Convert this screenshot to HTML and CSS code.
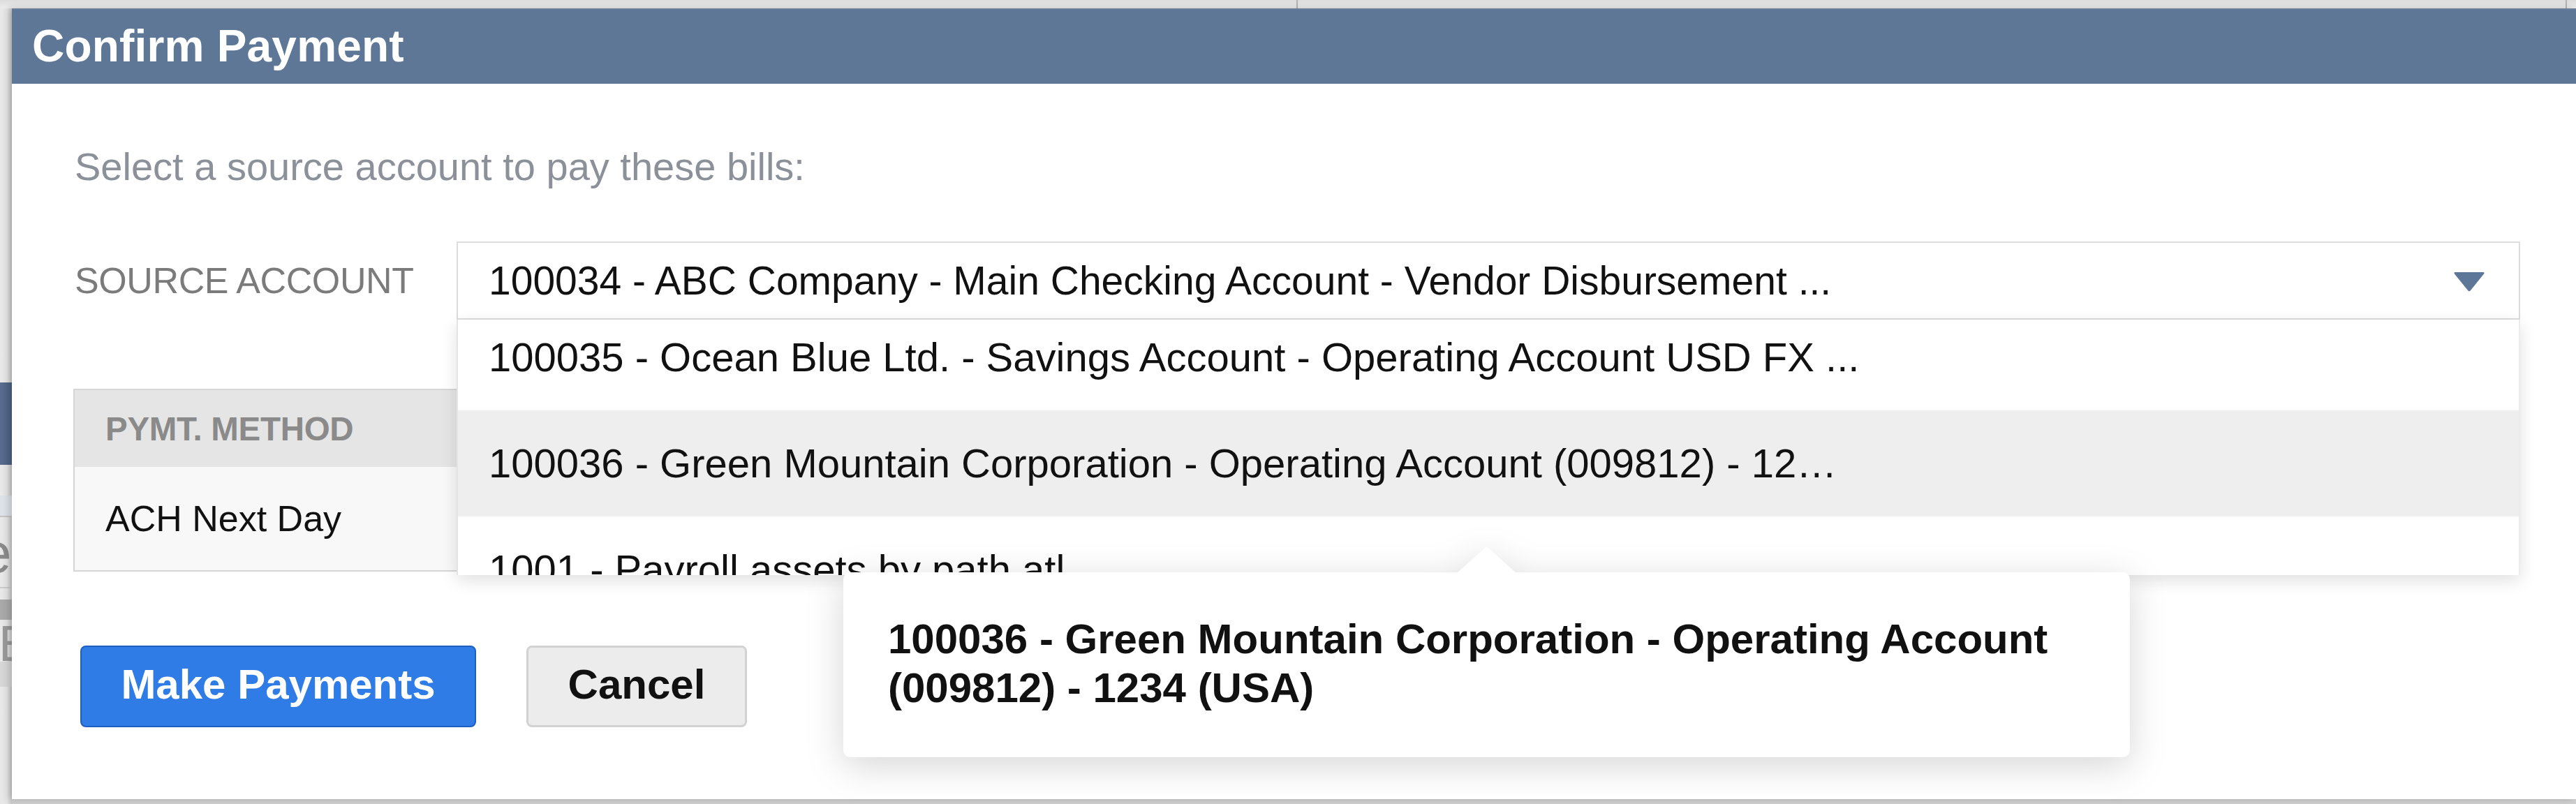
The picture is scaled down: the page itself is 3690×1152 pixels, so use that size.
FILE: index.html
```html
<!DOCTYPE html>
<html lang="en">
<head>
<meta charset="utf-8">
<title>Confirm Payment</title>
<link rel="stylesheet" href="styles.css">
</head>
<body>
<div class="page">
  <div class="topstrip">
    <span class="divider d1"></span>
    <span class="divider d2"></span>
  </div>
  <div class="side">
    <div class="frag-space s1"></div>
    <div class="frag-nav"></div>
    <div class="frag-space s2"></div>
    <div class="frag-strip"></div>
    <div class="frag-letter small">e</div>
    <div class="frag-line"></div>
    <div class="frag-block"></div>
    <div class="frag-letter big">E</div>
    <div class="frag-band"></div>
  </div>
</div>

<div class="dialog">
  <div class="titlebar">Confirm Payment</div>
  <div class="dialog-body">
    <p class="intro">Select a source account to pay these bills:</p>

    <div class="source-row">
      <div class="source-label">SOURCE ACCOUNT</div>
      <div class="select-wrap">
        <div class="select">
          <span class="select-value">100034 - ABC Company - Main Checking Account - Vendor Disbursement ...</span>
          <svg class="caret" width="46" height="30" viewBox="0 0 46 30"><path d="M3 2 H43 Q45.5 2 44 4.5 L25 28 Q23 30.5 21 28 L2 4.5 Q0.5 2 3 2 Z" fill="#5e7697"/></svg>
        </div>
        <div class="options">
          <div class="options-inner">
            <div class="option">100035 - Ocean Blue Ltd. - Savings Account - Operating Account USD FX ...</div>
            <div class="option active">100036 - Green Mountain Corporation - Operating Account (009812) - 12…</div>
            <div class="option">1001 - Payroll assets by path atl</div>
          </div>
        </div>
      </div>
    </div>

    <div class="method-table">
      <div class="method-head">PYMT. METHOD</div>
      <div class="method-cell">ACH Next Day</div>
    </div>

    <div class="actions">
      <button class="btn btn-primary">Make Payments</button>
      <button class="btn btn-secondary">Cancel</button>
    </div>
  </div>

  <div class="tooltip">
    <span class="tooltip-arrow"></span>
    <div class="tooltip-text">100036 - Green Mountain Corporation - Operating Account (009812) - 1234 (USA)</div>
  </div>
</div>
</body>
</html>
```

FILE: styles.css
```css
* { box-sizing: border-box; }

html, body {
  margin: 0;
  padding: 0;
}

body {
  width: 3690px;
  height: 1152px;
  overflow: hidden;
  position: relative;
  background: #e3e3e3;
  font-family: "Liberation Sans", Arial, Helvetica, sans-serif;
  color: #111;
}

/* ---------- background application (behind the modal) ---------- */
.page {
  height: 1152px;
  display: flex;
  flex-direction: column;
  background: #cfcfcf;
}

.topstrip {
  height: 12px;
  background: linear-gradient(#dcdcdc, #ececec);
  display: flex;
}

.divider {
  width: 2px;
  height: 12px;
  background: #b3b3b3;
}
.d1 { margin-left: 1857px; }
.d2 { margin-left: 1816px; }

.side {
  width: 17px;
  flex: 1;
  overflow: hidden;
  display: flex;
  flex-direction: column;
  background: linear-gradient(90deg, #e9e9e9 0%, #e4e4e4 60%, #c9c9c9 100%);
}

.frag-space.s1 { height: 536px; }
.frag-nav {
  height: 118px;
  background: linear-gradient(90deg, #5a6d90, #4c6083);
}
.frag-space.s2 { height: 44px; }
.frag-strip {
  height: 31px;
  background: #dde2ea;
  border-bottom: 2px solid #c4c4c4;
}
.frag-letter {
  color: #8a8a8a;
  white-space: nowrap;
}
.frag-letter.small {
  margin-top: 22px;
  height: 60px;
  font-size: 80px;
  line-height: 60px;
  margin-left: -28px;
}
.frag-line {
  margin-top: 18px;
  height: 2px;
  background: #c9c9c9;
}
.frag-block {
  margin-top: 16px;
  height: 29px;
  background: #a9a9a9;
}
.frag-letter.big {
  margin-top: 6px;
  height: 54px;
  font-size: 72px;
  line-height: 56px;
  margin-left: -2px;
  color: #9a9a9a;
}
.frag-band {
  height: 36px;
  background: #d6d6d6;
}

/* ---------- modal dialog ---------- */
.dialog {
  position: absolute;
  left: 17px;
  top: 12px;
  right: 0;
  height: 1133px;
  background: #ffffff;
  box-shadow: -4px 0 10px rgba(0, 0, 0, 0.18);
}

.titlebar {
  height: 108px;
  background: #5f7797;
  border-top: 2px solid #6b7f9c;
  color: #ffffff;
  font-weight: bold;
  font-size: 64px;
  line-height: 104px;
  padding-left: 29px;
  letter-spacing: 0.2px;
}

.dialog-body {
  padding: 87px 80px 0 88px;
}

.intro {
  margin: 0;
  font-size: 56px;
  line-height: 64px;
  color: #8b9099;
  padding-left: 2px;
}

.source-row {
  margin-top: 75px;
  display: flex;
  align-items: center;
}

.source-label {
  flex: 0 0 549px;
  font-size: 52px;
  line-height: 64px;
  color: #7b7b7b;
  padding-left: 2px;
  letter-spacing: -0.4px;
}

.select-wrap {
  flex: 1;
  position: relative;
  z-index: 2;
}

.select {
  height: 112px;
  border: 2px solid #dcdcdc;
  background: #ffffff;
  display: flex;
  align-items: center;
  justify-content: space-between;
  padding: 0 48px 0 44px;
}

.select-value {
  font-size: 57px;
  line-height: 64px;
  color: #111;
  white-space: nowrap;
}

.caret {
  display: block;
  margin-top: 2px;
}

.options {
  position: absolute;
  left: 0;
  right: 0;
  top: 112px;
  height: 366px;
  overflow: hidden;
  background: #ffffff;
  border-left: 2px solid #e4e4e4;
  border-right: 2px solid #ececec;
  box-shadow: 0 8px 22px rgba(0, 0, 0, 0.12);
}

.options-inner {
  margin-top: -22px;
}

.option {
  height: 152px;
  padding: 44px 44px;
  font-size: 58px;
  line-height: 64px;
  color: #111;
  white-space: nowrap;
}

.option.active {
  background: #eeeeee;
}

.method-table {
  margin-top: 99px;
  width: 820px;
  border: 2px solid #d6d6d6;
  position: relative;
  z-index: 1;
}

.method-head {
  height: 110px;
  background: #e5e5e5;
  display: flex;
  align-items: center;
  padding-left: 44px;
  font-size: 47.5px;
  font-weight: bold;
  color: #8a8a8a;
  letter-spacing: -0.3px;
}

.method-cell {
  height: 148px;
  background: #f8f8f8;
  display: flex;
  align-items: center;
  padding-left: 44px;
  font-size: 52px;
  color: #111;
}

.actions {
  margin-top: 106px;
  margin-left: 10px;
  display: flex;
  gap: 72px;
}

.btn {
  height: 117px;
  border-radius: 8px;
  font-family: "Liberation Sans", Arial, Helvetica, sans-serif;
  font-weight: bold;
  font-size: 60px;
  line-height: 1;
  padding: 0 0 6px;
  cursor: pointer;
}

.btn-primary {
  width: 567px;
  background: #2f7ce6;
  border: 2px solid #1e5fc2;
  color: #ffffff;
}

.btn-secondary {
  width: 316px;
  background: #ececec;
  border: 3px solid #d2d2d2;
  color: #111;
}

/* ---------- tooltip ---------- */
.tooltip {
  position: absolute;
  left: 1191px;
  top: 808px;
  width: 1843px;
  height: 265px;
  z-index: 3;
  filter: drop-shadow(0 12px 26px rgba(0, 0, 0, 0.16));
}

.tooltip-arrow {
  position: absolute;
  left: 879px;
  top: -37px;
  width: 85px;
  height: 38px;
  background: #ffffff;
  clip-path: polygon(50% 0, 100% 100%, 0 100%);
}

.tooltip-text {
  height: 100%;
  background: #ffffff;
  border-radius: 10px;
  padding: 61px 64px 0;
  font-size: 60px;
  line-height: 70px;
  font-weight: bold;
  color: #111;
}
```
